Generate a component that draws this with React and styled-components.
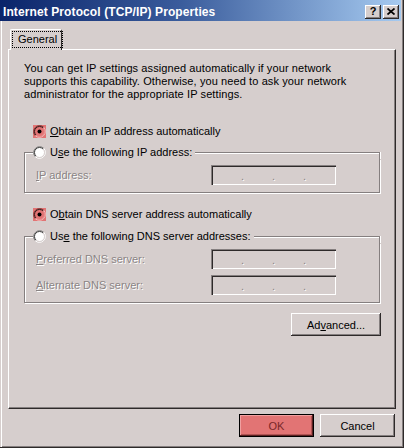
import React from "react";
import styled, { createGlobalStyle, css } from "styled-components";

const C = {
  face: "#d6cecd",
  light: "#ffffff",
  shadow: "#857f7f",
  dark: "#2e2a2a",
  red: "#e27474",
  disabled: "#8a8484",
};

const Global = createGlobalStyle`
  html, body { margin: 0; padding: 0; background: ${C.face}; }
  body { font-family: "Liberation Sans", Arial, sans-serif; font-size: 11px; color: #000; }
  * { box-sizing: border-box; }
`;

const Window = styled.div`
  width: 404px;
  height: 448px;
  background: ${C.face};
  display: flex;
  flex-direction: column;
  overflow: hidden;
  box-shadow: inset -1px -1px ${C.dark}, inset 1px 0 ${C.face}, inset 2px 0 ${C.light},
    inset -2px -2px ${C.shadow};
`;

const TitleBar = styled.div`
  height: 21px;
  margin-right: 3px;
  padding: 2px 2px 0 3px;
  display: flex;
  align-items: center;
  justify-content: space-between;
  background: linear-gradient(to right, #0a246a 0%, #3a5c9c 45%, #a6caf0 100%);
`;

const Title = styled.div`
  color: #fff;
  font-weight: bold;
  font-size: 12px;
  letter-spacing: 0.1px;
  white-space: nowrap;
`;

const CaptionButtons = styled.div`
  display: flex;
  gap: 2px;
`;

const CapBtn = styled.div`
  width: 16px;
  height: 14px;
  background: ${C.face};
  display: flex;
  align-items: center;
  justify-content: center;
  font-weight: bold;
  font-size: 11px;
  line-height: 1;
  padding-bottom: 1px;
  box-shadow: inset -1px -1px ${C.dark}, inset 1px 1px ${C.light}, inset -2px -2px ${C.shadow};
`;

const Body = styled.div`
  display: flex;
  flex-direction: column;
  padding: 8px 8px 0 8px;
`;

const TabStrip = styled.div`
  height: 20px;
  display: flex;
  align-items: flex-start;
  padding-left: 2px;
`;

const Tab = styled.div`
  position: relative;
  z-index: 1;
  width: 52px;
  height: 21px;
  background: ${C.face};
  border-top: 1px solid ${C.light};
  border-left: 1px solid ${C.light};
  border-right: 1px solid ${C.dark};
  border-radius: 2px 2px 0 0;
  padding: 1px 0 0 1px;
`;

const TabFocus = styled.span`
  display: inline-block;
  height: 17px;
  line-height: 15px;
  padding: 0 5px;
  border: 1px dotted #000;
  white-space: nowrap;
`;

const Panel = styled.div`
  height: 360px;
  border-top: 1px solid ${C.light};
  border-left: 1px solid ${C.light};
  border-right: 1px solid ${C.dark};
  border-bottom: 1px solid ${C.dark};
  box-shadow: inset -1px -1px ${C.shadow};
  padding: 12px 15px 0 15px;
  display: flex;
  flex-direction: column;
`;

const Intro = styled.p`
  margin: 0;
  line-height: 13px;
  letter-spacing: 0.1px;
  white-space: nowrap;
`;

const RadioRow = styled.div`
  display: flex;
  align-items: center;
  gap: 4px;
  height: 13px;
  margin-top: ${(p) => p.$mt}px;
  padding-left: 9px;
  line-height: 13px;
  white-space: nowrap;
`;

const RadioBox = styled.span`
  display: inline-flex;
  width: 13px;
  height: 13px;
  flex: none;
  background: ${(p) => (p.$checked ? C.red : "transparent")};
`;

const Group = styled.div`
  width: 356px;
  margin-top: ${(p) => p.$mt}px;
  display: flex;
  flex-direction: column;
`;

const GroupHead = styled.div`
  height: 13px;
  display: flex;
`;

const HeadCap = styled.div`
  width: 9px;
  margin-top: 6px;
  border-top: 1px solid ${C.shadow};
  border-left: 1px solid ${C.shadow};
  box-shadow: inset 1px 1px ${C.light};
`;

const HeadLegend = styled.div`
  display: flex;
  align-items: center;
  gap: 4px;
  padding-right: 3px;
  line-height: 13px;
  white-space: nowrap;
`;

const HeadLine = styled.div`
  flex: 1;
  margin-top: 6px;
  border-top: 1px solid ${C.shadow};
  border-right: 1px solid ${C.shadow};
  box-shadow: inset 0 1px ${C.light}, 1px 0 ${C.light};
`;

const GroupFrame = styled.div`
  border-left: 1px solid ${C.shadow};
  border-right: 1px solid ${C.shadow};
  border-bottom: 1px solid ${C.shadow};
  box-shadow: inset 1px 0 ${C.light}, 1px 1px ${C.light};
  padding: 6px 0 7px 8px;
  display: flex;
  flex-direction: column;
  gap: 6px;
`;

const FieldRow = styled.div`
  display: grid;
  grid-template-columns: 178px 125px;
  align-items: center;
  height: 20px;
`;

const DisabledLabel = styled.span`
  padding-left: 3px;
  color: ${C.disabled};
  text-shadow: 1px 1px 0 ${C.light};
  white-space: nowrap;
`;

const IpField = styled.div`
  width: 125px;
  height: 20px;
  background: ${C.face};
  box-shadow: inset 1px 1px ${C.shadow}, inset 2px 2px ${C.dark}, inset -1px -1px ${C.light},
    inset -2px -2px ${C.face};
  display: flex;
  justify-content: space-evenly;
  align-items: flex-end;
  padding: 0 2px 4px;
`;

const Dot = styled.span`
  line-height: 10px;
  color: ${C.disabled};
  text-shadow: 1px 1px 0 ${C.light};
`;

const ActionRow = styled.div`
  width: 357px;
  display: flex;
  justify-content: flex-end;
  margin-top: 10px;
`;

const Button = styled.button`
  width: ${(p) => p.$w}px;
  height: 23px;
  padding: 0;
  border: none;
  font-family: inherit;
  font-size: 11px;
  color: #000;
  background: ${C.face};
  box-shadow: inset -1px -1px ${C.dark}, inset 1px 1px ${C.light}, inset -2px -2px ${C.shadow};
  ${(p) =>
    p.$default &&
    css`
      background: ${C.red};
      color: #7a2828;
      box-shadow: inset 0 0 0 1px #000, inset -2px -2px #5a2020, inset 2px 2px #f0a0a0,
        inset -3px -3px #b05454;
    `}
`;

const ButtonBar = styled.div`
  display: flex;
  justify-content: flex-end;
  gap: 6px;
  margin-top: 5px;
  padding-right: 1px;
`;

const Key = styled.u`
  text-decoration: underline;
  text-underline-offset: 1px;
`;

function Radio({ checked }) {
  return (
    <RadioBox $checked={checked}>
      <svg width="13" height="13" viewBox="0 0 13 13">
        {!checked && <circle cx="6.5" cy="6.5" r="5" fill="#fff" />}
        <path
          d="M2.26 10.74 A6 6 0 0 1 10.74 2.26"
          fill="none"
          stroke={checked ? "#7a3a3a" : "#808080"}
        />
        <path
          d="M2.96 10.04 A5 5 0 0 1 10.04 2.96"
          fill="none"
          stroke={checked ? "#3a1a1a" : "#404040"}
        />
        <path
          d="M10.74 2.26 A6 6 0 0 1 2.26 10.74"
          fill="none"
          stroke={checked ? "#f4b8b8" : "#ffffff"}
        />
        <path
          d="M10.04 2.96 A5 5 0 0 1 2.96 10.04"
          fill="none"
          stroke={checked ? "#e89090" : C.face}
        />
        {checked && <circle cx="6.5" cy="6.5" r="2" fill="#000" />}
      </svg>
    </RadioBox>
  );
}

function Field({ label }) {
  return (
    <FieldRow>
      <DisabledLabel>{label}</DisabledLabel>
      <IpField>
        <Dot>.</Dot>
        <Dot>.</Dot>
        <Dot>.</Dot>
      </IpField>
    </FieldRow>
  );
}

function GroupBox({ mt, legend, children }) {
  return (
    <Group $mt={mt}>
      <GroupHead>
        <HeadCap />
        <HeadLegend>
          <Radio />
          <span>{legend}</span>
        </HeadLegend>
        <HeadLine />
      </GroupHead>
      <GroupFrame>{children}</GroupFrame>
    </Group>
  );
}

export default function App() {
  return (
    <>
      <Global />
      <Window>
        <TitleBar>
          <Title>Internet Protocol (TCP/IP) Properties</Title>
          <CaptionButtons>
            <CapBtn>?</CapBtn>
            <CapBtn>
              <svg width="8" height="7" viewBox="0 0 8 7">
                <path d="M0.5 0.5 L7.5 6.5 M7.5 0.5 L0.5 6.5" stroke="#000" strokeWidth="1.7" />
              </svg>
            </CapBtn>
          </CaptionButtons>
        </TitleBar>
        <Body>
          <TabStrip>
            <Tab>
              <TabFocus>General</TabFocus>
            </Tab>
          </TabStrip>
          <Panel>
            <Intro>
              You can get IP settings assigned automatically if your network
              <br />
              supports this capability. Otherwise, you need to ask your network
              <br />
              administrator for the appropriate IP settings.
            </Intro>
            <RadioRow $mt={24}>
              <Radio checked />
              <span>
                <Key>O</Key>btain an IP address automatically
              </span>
            </RadioRow>
            <GroupBox
              mt={8}
              legend={
                <>
                  U<Key>s</Key>e the following IP address:
                </>
              }
            >
              <Field
                label={
                  <>
                    <Key>I</Key>P address:
                  </>
                }
              />
            </GroupBox>
            <RadioRow $mt={15}>
              <Radio checked />
              <span>
                O<Key>b</Key>tain DNS server address automatically
              </span>
            </RadioRow>
            <GroupBox
              mt={9}
              legend={
                <>
                  Us<Key>e</Key> the following DNS server addresses:
                </>
              }
            >
              <Field
                label={
                  <>
                    <Key>P</Key>referred DNS server:
                  </>
                }
              />
              <Field
                label={
                  <>
                    <Key>A</Key>lternate DNS server:
                  </>
                }
              />
            </GroupBox>
            <ActionRow>
              <Button $w={90}>
                Ad<Key>v</Key>anced...
              </Button>
            </ActionRow>
          </Panel>
          <ButtonBar>
            <Button $w={75} $default>
              OK
            </Button>
            <Button $w={75}>Cancel</Button>
          </ButtonBar>
        </Body>
      </Window>
    </>
  );
}
